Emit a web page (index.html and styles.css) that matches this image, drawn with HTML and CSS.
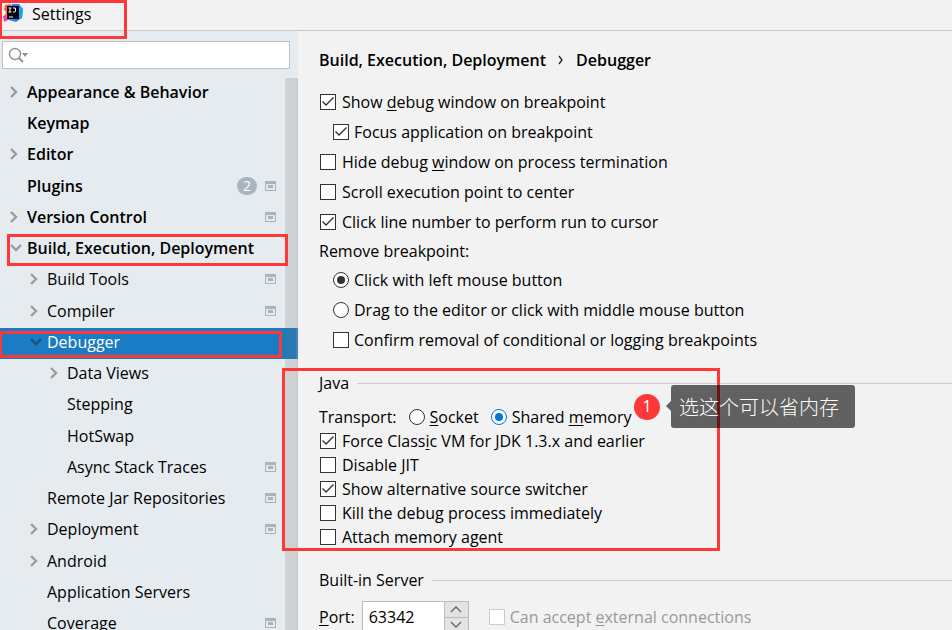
FILE: index.html
```
<!DOCTYPE html>
<html lang="en">
<head>
<meta charset="utf-8">
<title>Settings</title>
<link rel="stylesheet" href="styles.css">
</head>
<body>
<svg class="defs" aria-hidden="true">
  <symbol id="right" viewBox="0 0 8 12"><path d="M1 1l5 5-5 5" fill="none" stroke="currentColor" stroke-width="2.4"/></symbol>
  <symbol id="down" viewBox="0 0 12 8"><path d="M1 1l5 5 5-5" fill="none" stroke="currentColor" stroke-width="2.4"/></symbol>
  <symbol id="project" viewBox="0 0 11 10"><path d="M0 0h11v10H0z" fill="#a9b4bd"/><path d="M1 3h9v6H1z" fill="#e3e8ec"/><path d="M3 4h5v3H3z" fill="#a9b4bd"/></symbol>
</svg>
<div class="app">
  <header class="titlebar">
    <svg class="logo" viewBox="0 0 20 20" aria-hidden="true">
      <path d="M1 6l6-5 4 4-3 10-5 1-2-3 2-3z" fill="#fc7a24"/>
      <path d="M2 2l5-1 2 3-4 4-4-1z" fill="#fb5a5c"/>
      <path d="M0 13l5-1 5 5-5 0-4 2z" fill="#f03bb4"/>
      <path d="M9 1l7 0 4 5-1 9-6 4-7-2z" fill="#168bf5"/>
      <path d="M15 2l5 4-1 8-4 3z" fill="#15a5f2"/>
      <path d="M4 3h12v13H4z" fill="#080008"/>
      <path d="M5.500 5h3M7 5v4M5.500 9h3M10 5h2.500v3.500l-1 .5h-1.500M6 14h4" fill="none" stroke="#fff" stroke-width="1"/>
    </svg>
    <h1>Settings</h1>
    <span class="mark mark-title"></span>
  </header>
  <div class="body">
    <aside class="sidebar">
      <label class="search">
        <svg viewBox="0 0 22 16" aria-hidden="true"><circle cx="7" cy="7" r="5.500" fill="none" stroke="#8d9398" stroke-width="1.400"/><path d="M11 11l4 4" stroke="#8d9398" stroke-width="2"/><path d="M14 6h6l-3 4z" fill="#8d9398"/></svg>
        <input type="search" aria-label="Search settings">
      </label>
      <nav class="tree-wrap">
        <ul class="tree">
          <li class="top"><svg class="arrow"><use href="#right"/></svg><a href="#">Appearance &amp; Behavior</a></li>
          <li class="top"><span class="arrow"></span><a href="#">Keymap</a></li>
          <li class="top"><svg class="arrow"><use href="#right"/></svg><a href="#">Editor</a></li>
          <li class="top"><span class="arrow"></span><a href="#">Plugins</a><span class="count">2</span><svg class="proj"><use href="#project"/></svg></li>
          <li class="top"><svg class="arrow"><use href="#right"/></svg><a href="#">Version Control</a><svg class="proj"><use href="#project"/></svg></li>
          <li class="top"><svg class="arrow open"><use href="#down"/></svg><a href="#">Build, Execution, Deployment</a><span class="mark mark-build"></span></li>
          <li class="sub"><svg class="arrow"><use href="#right"/></svg><a href="#">Build Tools</a><svg class="proj"><use href="#project"/></svg></li>
          <li class="sub"><svg class="arrow"><use href="#right"/></svg><a href="#">Compiler</a><svg class="proj"><use href="#project"/></svg></li>
          <li class="sub selected"><svg class="arrow open"><use href="#down"/></svg><a href="#">Debugger</a><span class="mark mark-debug"></span></li>
          <li class="leaf"><svg class="arrow"><use href="#right"/></svg><a href="#">Data Views</a></li>
          <li class="leaf"><span class="arrow"></span><a href="#">Stepping</a></li>
          <li class="leaf"><span class="arrow"></span><a href="#">HotSwap</a></li>
          <li class="leaf"><span class="arrow"></span><a href="#">Async Stack Traces</a><svg class="proj"><use href="#project"/></svg></li>
          <li class="sub"><span class="arrow"></span><a href="#">Remote Jar Repositories</a><svg class="proj"><use href="#project"/></svg></li>
          <li class="sub"><svg class="arrow"><use href="#right"/></svg><a href="#">Deployment</a><svg class="proj"><use href="#project"/></svg></li>
          <li class="sub"><svg class="arrow"><use href="#right"/></svg><a href="#">Android</a></li>
          <li class="sub"><span class="arrow"></span><a href="#">Application Servers</a></li>
          <li class="sub"><span class="arrow"></span><a href="#">Coverage</a><svg class="proj"><use href="#project"/></svg></li>
        </ul>
        <span class="thumb"></span>
      </nav>
    </aside>
    <main class="content">
      <h2 class="crumbs"><span>Build, Execution, Deployment</span><svg viewBox="0 0 6 10" aria-hidden="true"><path d="M1 1l3 4-3 4" fill="none" stroke="#222" stroke-width="1.300"/></svg><span>Debugger</span></h2>
      <div class="options">
        <label class="opt"><input type="checkbox" checked><span>Show <u>d</u>ebug window on breakpoint</span></label>
        <label class="opt nested"><input type="checkbox" checked><span>Focus application on breakpoint</span></label>
        <label class="opt"><input type="checkbox"><span>Hide debug <u>w</u>indow on process termination</span></label>
        <label class="opt"><input type="checkbox"><span>Scroll execution point to center</span></label>
        <label class="opt"><input type="checkbox" checked><span>Click line number to perform run to cursor</span></label>
      </div>
      <div class="options" role="radiogroup" aria-labelledby="remove">
        <div class="caption" id="remove">Remove breakpoint:</div>
        <label class="opt nested"><input type="radio" name="remove" checked><span>Click with left mouse button</span></label>
        <label class="opt nested"><input type="radio" name="remove"><span>Drag to the editor or click with middle mouse button</span></label>
        <label class="opt nested"><input type="checkbox"><span>Confirm removal of conditional or logging breakpoints</span></label>
      </div>
      <section class="java">
        <h3>Java</h3>
        <div class="transport" role="radiogroup" aria-label="Transport">
          <span>Transport:</span>
          <label class="opt"><input type="radio" name="transport"><span><u>S</u>ocket</span></label>
          <label class="opt"><input class="focused" type="radio" name="transport" checked><span>Shared <u>m</u>emory</span></label>
        </div>
        <div class="options tight">
          <label class="opt"><input type="checkbox" checked><span>Force Class<u>i</u>c VM for JDK 1.3.x and earlier</span></label>
          <label class="opt"><input type="checkbox"><span>Disable JIT</span></label>
          <label class="opt"><input type="checkbox" checked><span>Show alternative source switcher</span></label>
          <label class="opt"><input type="checkbox"><span>Kill the debug process immediately</span></label>
          <label class="opt"><input type="checkbox"><span>Attach memory agent</span></label>
        </div>
        <span class="mark mark-java"></span>
        <div class="note"><span class="num">1</span><span class="tip" lang="zh">选这个可以省内存</span></div>
      </section>
      <section class="server">
        <h3>Built-in Server</h3>
        <div class="port-row">
          <label for="port"><u>P</u>ort:</label>
          <div class="spinner">
            <input id="port" type="text" value="63342">
            <div class="steps">
              <button type="button" aria-label="Increase"><svg viewBox="0 0 12 7"><path d="M1 6l5-5 5 5" fill="none" stroke="#666" stroke-width="1.300"/></svg></button>
              <button type="button" aria-label="Decrease"><svg viewBox="0 0 12 7"><path d="M1 1l5 5 5-5" fill="none" stroke="#666" stroke-width="1.300"/></svg></button>
            </div>
          </div>
          <label class="opt off"><input type="checkbox" disabled><span>Can accept <u>e</u>xternal connections</span></label>
        </div>
      </section>
    </main>
  </div>
</div>
</body>
</html>
```
FILE: styles.css
```
* { box-sizing: border-box; }
body {
  margin: 0;
  font: 16px/24px "Open Sans", "Noto Sans CJK SC", sans-serif;
  color: #000;
  background: #f2f2f2;
}
h1, h2, h3, ul { margin: 0; padding: 0; font-size: 16px; }
h1, h3 { font-weight: 400; }
h2 { font-weight: 600; }
a { color: inherit; text-decoration: none; }
u { text-underline-offset: 2px; text-decoration-thickness: 1px; text-decoration-skip-ink: none; }
.defs { display: none; }
.app { height: 100vh; overflow: hidden; display: flex; flex-direction: column; }
.titlebar {
  position: relative;
  z-index: 2;
  flex: none;
  height: 31px;
  display: flex;
  align-items: flex-start;
  gap: 9px;
  padding: 2px 3px 0;
  border-bottom: 1px solid #c9c9c9;
}
.logo { width: 20px; height: 20px; margin-top: 1px; }
.body { flex: 1; min-height: 0; display: flex; }
.sidebar {
  flex: none;
  width: 298px;
  display: flex;
  flex-direction: column;
  background: #e6ebef;
}
.search {
  flex: none;
  height: 28px;
  margin: 10px 8px 9px 2px;
  padding: 0 5px;
  display: flex;
  align-items: center;
  background: #fff;
  border: 1px solid #bfc2c4;
}
.search svg { width: 22px; height: 16px; flex: none; }
.search input { flex: 1; min-width: 0; border: 0; outline: 0; font: inherit; background: none; }
.tree-wrap { position: relative; flex: 1; min-height: 0; }
.tree { list-style: none; }
.tree li {
  position: relative;
  height: 31px;
  display: flex;
  align-items: center;
  padding-right: 22px;
}
.tree li:nth-child(4n) { height: 32px; }
.tree a { flex: 1; white-space: nowrap; line-height: 28px; padding-bottom: 3px; }
.top { padding-left: 10px; font-weight: 600; }
.sub { padding-left: 30px; }
.leaf { padding-left: 50px; }
.arrow { flex: none; width: 8px; height: 12px; margin: 0 9px 3px 0; color: #9a9da0; }
.arrow.open { width: 12px; height: 8px; margin: 0 5px 4px 0; }
.selected { background: #1a7cc4; color: #fff; }
.selected .arrow { color: #145481; }
.proj { flex: none; width: 11px; height: 10px; margin-bottom: 3px; }
.count {
  width: 20px;
  height: 18px;
  margin: 0 8px 3px 0;
  border-radius: 9px;
  background: #a9b4bd;
  color: #fff;
  font-size: 14px;
  font-weight: 400;
  line-height: 18px;
  text-align: center;
}
.thumb {
  position: absolute;
  top: 0;
  right: 0;
  bottom: 0;
  width: 13px;
  background: rgba(110, 110, 110, .2);
  border-right: 2px solid rgba(180, 180, 180, .2);
}
.mark { position: absolute; border: 3px solid #fd3838; pointer-events: none; }
.mark-title { top: 0; left: 0; width: 127px; height: 39px; border-left-width: 2px; }
.mark-build { z-index: 1; top: 0; left: 7px; right: 10px; height: 32px; }
.mark-debug { z-index: 1; top: 3px; left: -1px; right: 16px; height: 27px; }
.content { flex: 1; min-width: 0; padding: 17px 0 0 21px; white-space: nowrap; }
.crumbs { display: flex; align-items: center; gap: 12px; margin-bottom: 15px; }
.crumbs svg { width: 6px; height: 10px; }
.opt { display: flex; align-items: center; gap: 5px; height: 30px; }
.options .opt { padding-left: 1px; gap: 6px; }
.options .nested { padding-left: 14px; gap: 5px; }
.options.tight .opt { height: 24px; }
.caption { line-height: 28px; }
.opt input {
  appearance: none;
  flex: none;
  width: 16px;
  height: 16px;
  margin: 0;
  display: grid;
  place-items: center;
  background: #fff;
  border: 1px solid #333;
}
.opt input[type="radio"] { border-radius: 50%; }
.opt input[type="checkbox"]:checked::before {
  content: "";
  width: 12px;
  height: 10px;
  background: #333;
  clip-path: polygon(0 5px, 1px 4px, 4px 7px, 11px 0, 12px 1px, 4px 9px);
}
.opt input[type="radio"]:checked::before {
  content: "";
  width: 8px;
  height: 8px;
  border-radius: 50%;
  background: #333;
}
.opt input.focused { border-color: #0078d7; }
.opt input.focused:checked::before { background: #0078d7; }
.off { color: #999; }
.opt input:disabled { border-color: #ccc; }
h3 { display: flex; align-items: center; gap: 8px; }
h3::after { content: ""; flex: 1; height: 1px; background: #ccc; }
.java { position: relative; margin-top: 16px; }
.transport { display: flex; align-items: center; gap: 12px; height: 24px; margin-top: 10px; }
.mark-java { top: -3px; left: -37px; width: 438px; height: 183px; }
.note { position: absolute; top: 14px; left: 315px; display: flex; align-items: center; gap: 11px; }
.num {
  width: 26px;
  height: 26px;
  border-radius: 50%;
  background: #fd3838;
  color: #fff;
  line-height: 24px;
  text-align: center;
}
.tip {
  position: relative;
  height: 43px;
  padding: 0 16px 0 8px;
  border-radius: 3px;
  background: rgba(0, 0, 0, .6);
  color: #fff;
  font: 300 20px/43px "Noto Sans CJK SC", sans-serif;
}
.tip::before {
  content: "";
  position: absolute;
  top: 16px;
  right: 100%;
  border: 5px solid transparent;
  border-left: 0;
  border-right-color: rgba(0, 0, 0, .6);
}
.server { margin-top: 19px; }
.port-row { display: flex; align-items: center; gap: 7px; margin-top: 9px; }
.spinner { display: flex; height: 32px; border: 1px solid #bbb; background: #fff; }
.spinner input { width: 81px; border: 0; outline: 0; padding: 0 6px; font: inherit; background: none; }
.steps { display: flex; flex-direction: column; width: 24px; border-left: 1px solid #bbb; }
.steps button {
  flex: 1;
  display: grid;
  place-items: center;
  padding: 0;
  border: 0;
  background: #e3e3e3;
}
.steps button + button { border-top: 1px solid #bbb; }
.steps svg { width: 12px; height: 7px; }
.off { margin-left: 13px; }
```
